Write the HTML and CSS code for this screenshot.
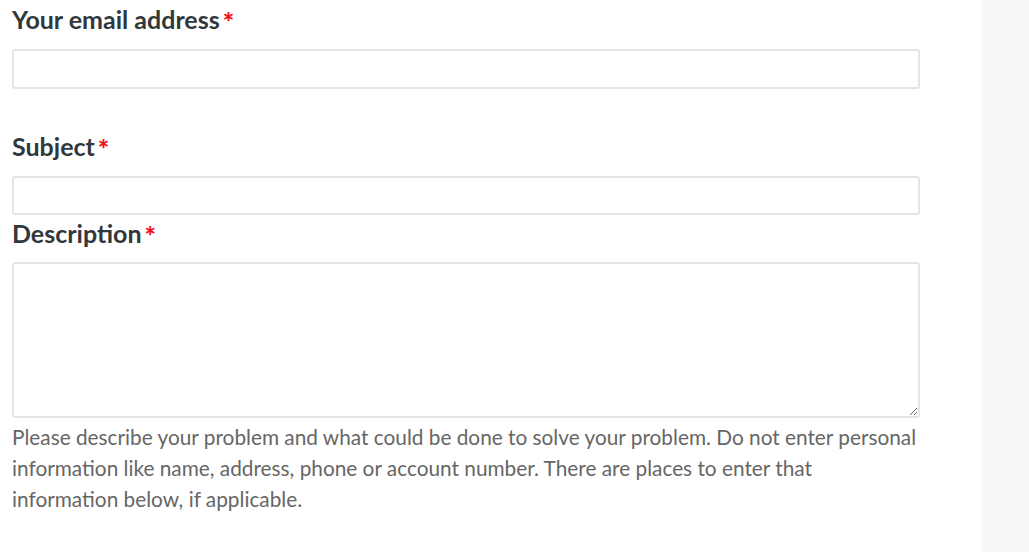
FILE: index.html
```html
<!DOCTYPE html>
<html lang="en">
<head>
<meta charset="utf-8">
<title>Contact form</title>
<link rel="stylesheet" href="styles.css">
</head>
<body>
<div class="page">
  <main class="main">
    <form class="form">
      <div class="field field-email">
        <label class="label" for="email">Your email address<span class="req">*</span></label>
        <input class="input" id="email" type="email">
      </div>
      <div class="field field-subject">
        <label class="label" for="subject">Subject<span class="req">*</span></label>
        <input class="input" id="subject" type="text">
      </div>
      <div class="field field-desc">
        <label class="label" for="desc">Description<span class="req">*</span></label>
        <textarea class="textarea" id="desc"></textarea>
        <p class="help">Please describe your problem and what could be done to solve your problem. Do not enter personal information like name, address, phone or account number. There are places to enter that information below, if applicable.</p>
      </div>
    </form>
  </main>
  <aside class="aside"></aside>
</div>
</body>
</html>
```
FILE: styles.css
```css
* { box-sizing: border-box; }
html, body { margin: 0; padding: 0; background: #fff; }
body { font-family: Lato, "Open Sans", sans-serif; color: #333; }
.page { display: flex; min-height: 552px; }
.main { width: 982px; padding: 5px 0 0 12px; }
.aside { flex: 1; background: #f8f8f8; }
.form { width: 908px; display: flex; flex-direction: column; }
.field { display: flex; flex-direction: column; }
.label { display: block; height: 28px; font-size: 25px; line-height: 28px; font-weight: 700; color: #32373c; }
.req { color: #f0141a; margin-left: 3px; font-size: 27px; line-height: 0; font-weight: 900; vertical-align: -3px; }
.input { display: block; height: 40px; width: 100%; border: 2px solid #e4e4e4; border-radius: 3px; background: #fff; margin-top: 16px; font: inherit; }
.field-subject { margin-top: 43px; }
.field-subject .input { margin-top: 16px; height: 39px; }
.field-desc { margin-top: 4px; }
.textarea { display: block; width: 100%; height: 156px; margin-top: 15px; border: 2px solid #e4e4e4; border-radius: 3px; font: inherit; resize: vertical; }
.help { margin: 3px 0 0; font-size: 20.8px; line-height: 31px; color: #666; }
```
